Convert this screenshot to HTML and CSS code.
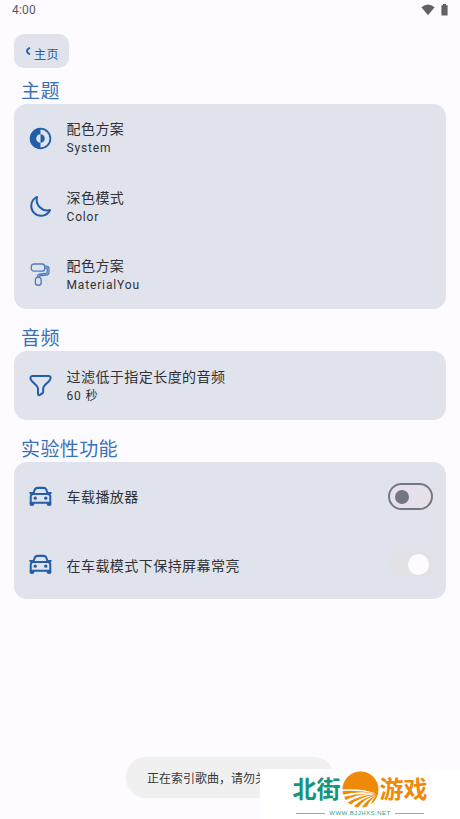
FILE: index.html
```
<!DOCTYPE html>
<html lang="zh-CN">
<head>
<meta charset="utf-8">
<title>设置</title>
<link rel="stylesheet" href="styles.css">
</head>
<body>
<svg width="0" height="0" class="defs">
  <symbol id="car" viewBox="0 0 24 24">
    <path d="M1.800 12Q1.800 9.300 4.500 9.300H19.500Q22.200 9.300 22.200 12V20.300M1.800 12V20.300M2.200 18.600H21.800M4.500 9.300 5.800 5.300Q6.500 3 9 3H15Q17.500 3 18.200 5.300L19.500 9.300M1.300 8.300H3.500M22.700 8.300H20.500" fill="none" stroke="currentColor" stroke-width="2.100" stroke-linejoin="round" stroke-linecap="round"/>
    <path d="M.8 18H5.500V20Q5.500 21.800 3.200 21.800Q.8 21.800 .8 20ZM18.500 18H23.200V20Q23.200 21.800 20.800 21.800Q18.500 21.800 18.500 20Z" fill="currentColor"/>
    <circle cx="6.500" cy="13.800" r="1.700" fill="currentColor"/><circle cx="17.500" cy="13.800" r="1.700" fill="currentColor"/>
  </symbol>
</svg>
<div class="screen">
  <header class="status">
    <span>4:00</span>
    <span class="status-icons">
      <svg width="14" height="12" viewBox="0 0 14 12"><path d="M.4 3.200Q7-2 13.600 3.200L7 11.300Z" fill="#626166"/></svg>
      <svg width="7" height="12" viewBox="0 0 7 12"><path d="M2 0H5V1.200H6.600V11.500H.4V1.200H2Z" fill="#626166"/></svg>
    </span>
  </header>
  <button class="back">
    <svg width="6" height="8" viewBox="0 0 6 8"><path d="M5 .8Q2 2.200 2 4T5 7.200" fill="none" stroke="currentColor" stroke-width="1.800"/></svg>
    <span>主页</span>
  </button>

  <h2>主题</h2>
  <section class="card">
    <div class="row">
      <svg class="icon" viewBox="0 0 24 24"><circle cx="12" cy="12" r="10.300" fill="none" stroke="currentColor" stroke-width="1.900"/><path d="M12 1.200A10.800 10.800 0 0 0 12 22.800V16.500A4.500 4.500 0 0 1 12 7.500ZM12 7.500A4.500 4.500 0 0 1 12 16.500Z" fill="currentColor"/></svg>
      <div class="label"><span class="name">配色方案</span><span class="value">System</span></div>
    </div>
    <div class="row">
      <svg class="icon" viewBox="0 0 24 24"><path d="M8.400 2A10.300 10.300 0 1 0 22 15.700A11.200 11.200 0 0 1 8.400 2Z" fill="none" stroke="currentColor" stroke-width="2.100" stroke-linejoin="round"/></svg>
      <div class="label"><span class="name">深色模式</span><span class="value">Color</span></div>
    </div>
    <div class="row">
      <svg class="icon thin" viewBox="0 0 24 24"><g fill="none" stroke="currentColor" stroke-width="1.400" stroke-linejoin="round"><rect x="2.400" y="1" width="14" height="7.500" rx="2.800"/><path d="M16.400 3.300H17.500Q20.800 3.300 20.800 6V10Q20.800 12.500 18 12.700L11.500 13.300Q10.300 13.500 10.300 15M16.400 5.300H19V9.600Q19 10.800 17.700 11L11 11.700Q8.700 12.100 8.700 15"/><rect x="6.700" y="15" width="6" height="8.200" rx="2.600"/></g></svg>
      <div class="label"><span class="name">配色方案</span><span class="value">MaterialYou</span></div>
    </div>
  </section>

  <h2>音频</h2>
  <section class="card">
    <div class="row">
      <svg class="icon" viewBox="0 0 24 24"><path d="M3.500 2.200H20.500Q22.500 2.200 22.500 4.200Q22.500 6 20.800 7.500L16.200 12Q14.800 13.400 14.800 15.500V18.400Q14.800 19.500 13.800 20.200L11.500 21.800Q9.600 22.800 9.400 20.700V15.500Q9.400 14 8.200 12.600L3 7.300Q1.500 5.700 1.500 4.200Q1.500 2.200 3.500 2.200Z" fill="none" stroke="currentColor" stroke-width="2.100" stroke-linejoin="round"/></svg>
      <div class="label"><span class="name">过滤低于指定长度的音频</span><span class="value">60 秒</span></div>
    </div>
  </section>

  <h2>实验性功能</h2>
  <section class="card">
    <div class="row">
      <svg class="icon"><use href="#car"/></svg>
      <div class="label"><span class="name">车载播放器</span></div>
      <span class="switch"></span>
    </div>
    <div class="row">
      <svg class="icon"><use href="#car"/></svg>
      <div class="label"><span class="name">在车载模式下保持屏幕常亮</span></div>
      <span class="switch on"></span>
    </div>
  </section>

  <div class="toast">正在索引歌曲，请勿关闭</div>
  <div class="brand">
    <div class="brand-main">
      <span class="green">北街</span>
      <svg width="37" height="37" viewBox="0 0 37 37"><circle cx="18.500" cy="18.500" r="18" fill="#ef8a08"/><path d="M0 18.600Q20 17 34 22.500Q18 19 0 20ZM0 24Q18 19 34 23Q18 21.500 1 26ZM2 30Q18 21.500 34 23.500Q18 23.500 4 32.500ZM7 35Q18 25 34 24Q20 26.500 10 37ZM15 38Q22 27 34 24.500Q24 29 19 38ZM24 38Q27 29 34 25Q29 30 28 37Z" fill="#fff"/></svg>
      <span class="orange">游戏</span>
    </div>
    <div class="brand-url">WWW.BJJHXS.NET</div>
  </div>
</div>
</body>
</html>
```
FILE: styles.css
```
* { box-sizing: border-box; }
body { margin: 0; background: #fdfbff; font-family: Roboto, "Noto Sans CJK SC", sans-serif; color: #303136; }
.defs { position: absolute; }
.screen { position: relative; width: 460px; height: 819px; padding: 0 14px; overflow: hidden; }
.status { display: flex; justify-content: space-between; height: 34px; margin: 0 -3px 0 -2px; padding-top: 3px; font-size: 12px; line-height: 15px; letter-spacing: .2px; color: #59595e; }
.status-icons { display: flex; gap: 6px; padding-top: 1px; margin-right: 1px; }
.back { display: flex; align-items: center; width: 55px; height: 34px; padding: 0 0 0 11px; gap: 3px; border: 0; border-radius: 10px; background: #e0e3ec; color: #235fa9; font: 12px/18px Roboto, "Noto Sans CJK SC", sans-serif; letter-spacing: .4px; }
.back span { padding-top: 7px; white-space: nowrap; }
h2 { margin: 0; padding: 10px 7px 0; height: 36px; font-size: 19px; line-height: 27px; font-weight: 400; letter-spacing: .4px; color: #3871b5; }
.card { border-radius: 13px; background: #e0e3ec; }
.card + h2 { margin-top: 6.600px; padding-top: 9.500px; }
.row { display: flex; align-items: center; height: 68.300px; padding: 0 13px 0 14.500px; }
.icon { width: 23px; height: 23px; flex: none; color: #235fa9; }
.thin { color: #4c7fbd; }
.label { flex: 1; margin-left: 15px; padding-top: 1.500px; display: flex; flex-direction: column; }
.name { font-size: 14px; line-height: 20px; letter-spacing: .45px; }
.value { font-size: 12px; line-height: 19px; letter-spacing: .85px; }
.switch { width: 45px; height: 27px; border: 2px solid #74777f; border-radius: 14px; background: #e6e1e8; display: flex; align-items: center; padding-left: 5px; }
.switch::before { content: ""; width: 14px; height: 14px; border-radius: 50%; background: #74777f; }
.switch.on { border-color: #e1e1e6; background: #e1e1e6; padding-left: 18px; }
.switch.on::before { width: 21px; height: 21px; background: #fdfbff; }
.toast { position: absolute; left: 126px; top: 757px; width: 208px; height: 41px; padding-left: 21px; border-radius: 20px; background: #f0f0f0; font-size: 12px; line-height: 44px; color: #383838; white-space: nowrap; }
.brand { position: absolute; left: 260px; top: 769px; width: 200px; height: 50px; background: #fff; }
.brand-main { display: flex; align-items: center; justify-content: center; gap: 1px; height: 40px; font-size: 24px; line-height: 36px; font-weight: 700; }
.brand-main span { padding-top: 2px; }
.green { color: #15937b; }
.orange { color: #ef8a08; }
.brand-url { display: flex; align-items: center; gap: 4px; margin: 0 36px; font: 6px/9px "Liberation Sans", sans-serif; letter-spacing: .5px; color: #35a08c; white-space: nowrap; }
.brand-url::before, .brand-url::after { content: ""; flex: 1; height: 1px; background: #72bdae; }
```
